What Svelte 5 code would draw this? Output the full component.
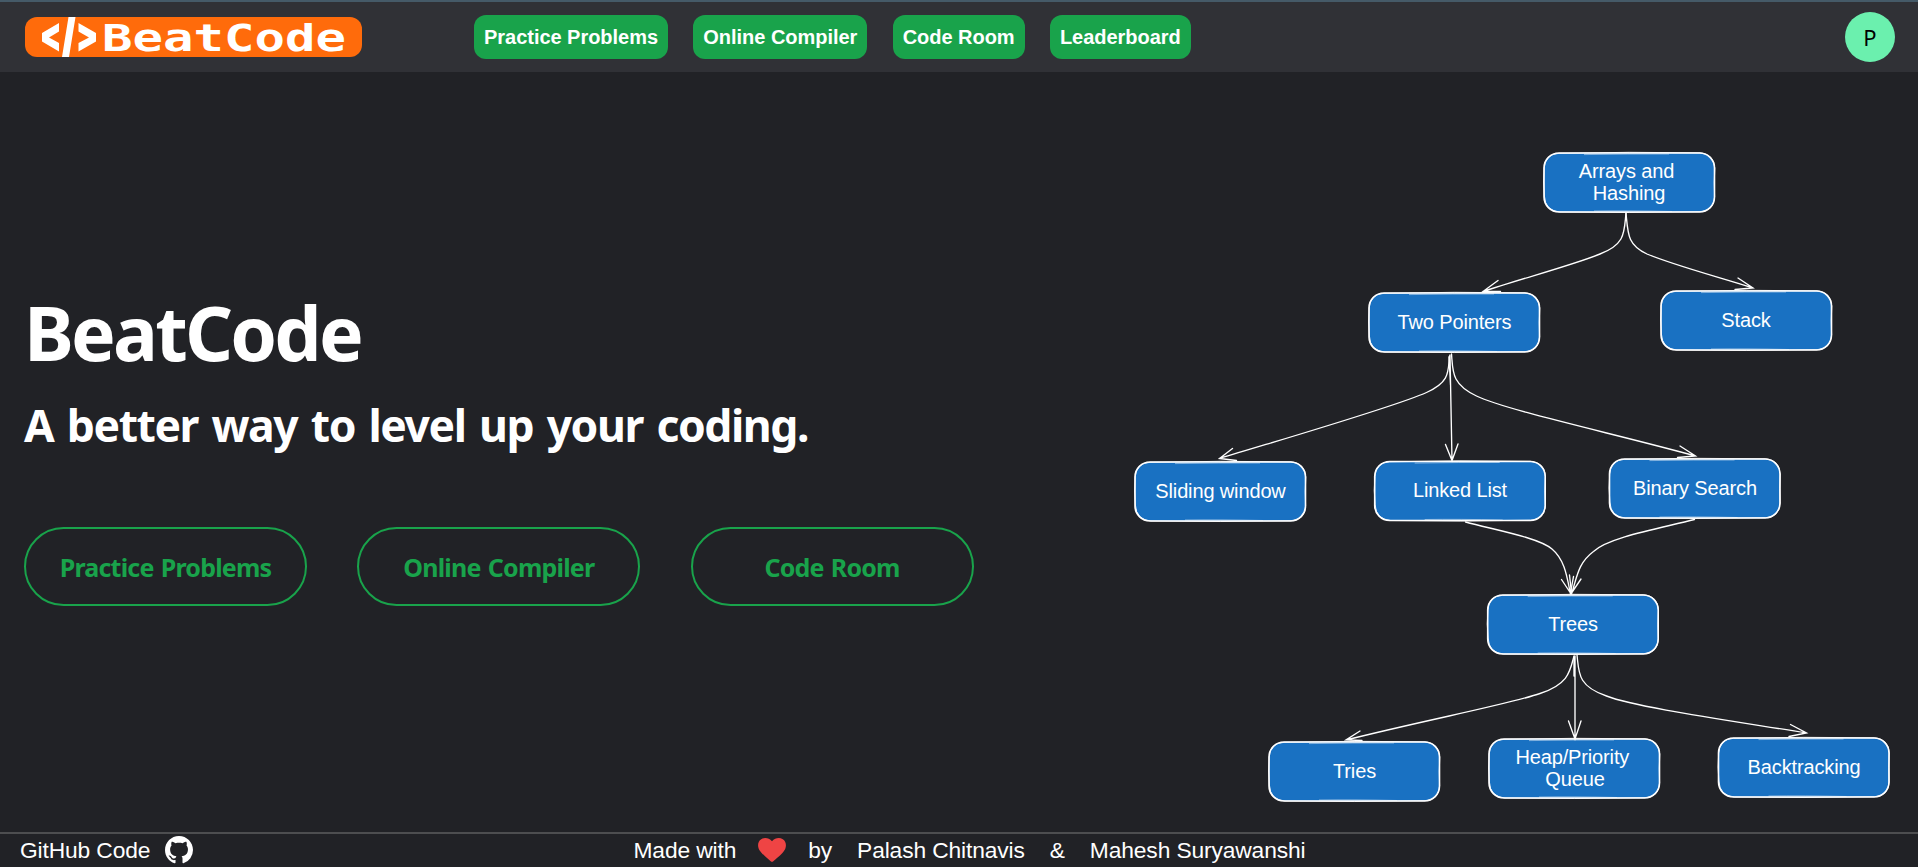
<script>
  const links = ['Practice Problems', 'Online Compiler', 'Code Room', 'Leaderboard'];
  const actions = ['Practice Problems', 'Online Compiler', 'Code Room'];

  // Each text line: [label, centre x, baseline y]
  const nodes = [
    { x: 1544, y: 153, lines: [['Arrays and', 1626.5, 178], ['Hashing', 1629, 200]] },
    { x: 1369, y: 293, lines: [['Two Pointers', 1454.5, 329]] },
    { x: 1661, y: 291, lines: [['Stack', 1746, 327]] },
    { x: 1135, y: 462, lines: [['Sliding window', 1220.5, 498]] },
    { x: 1374.7, y: 461.5, lines: [['Linked List', 1460, 497]] },
    { x: 1609.5, y: 459, lines: [['Binary Search', 1695, 495]] },
    { x: 1487.7, y: 595, lines: [['Trees', 1573, 631]] },
    { x: 1269, y: 742, lines: [['Tries', 1354.5, 778]] },
    { x: 1489, y: 739, lines: [['Heap/Priority', 1572.3, 764], ['Queue', 1575, 786]] },
    { x: 1718.5, y: 738, lines: [['Backtracking', 1804, 774]] }
  ];

  const edges = [
    'M1626 213C1624 232 1626 244 1600 254C1573 265 1520 279 1483 291.5M1498 280.5L1483 291.5L1500.5 291.5',
    'M1626 213C1628 233 1627 245 1647 254C1673 265 1715 276 1753 288M1738 278L1753 288L1735 289.5',
    'M1449.5 356C1448 372 1450 382 1426.5 392.5C1397 406 1290 437 1219.5 458.5M1232.5 448.5L1219.5 458.5L1236.5 460.5',
    'M1450 355L1452 460.5M1445.5 444.5L1452 460.5L1458 444M1449 357L1450.5 385',
    'M1451.5 354C1453 371 1451 384 1476.5 396C1505 410 1620 435 1695.5 456M1680 446L1695.5 456L1677.5 457.5',
    'M1465.5 522C1500 531 1539 538 1552 549C1565 560 1567 577 1570.5 594M1561.5 579.5L1570.5 593L1573.5 576.5',
    'M1694.5 519.5C1662 528 1609 537 1593.5 551.5C1578 563 1577 577 1571.5 594M1581 579L1571.5 593L1569.5 575',
    'M1574 656C1570 671 1569 684 1540 693.5C1510 704 1430 719 1346 740M1360 731L1346 740L1362 740.5',
    'M1575 656L1575 739M1568.5 721L1575 739L1581 721M1574 657L1574 676',
    'M1577 655C1579 672 1577 686 1606.5 696C1635 707 1720 719 1806.5 733M1790.5 724.5L1806.5 733L1789 736.5'
  ];
</script>

<div class="page">
  <header>
    <svg class="logo" width="337" height="40" viewBox="0 0 337 40" aria-label="BeatCode">
      <rect width="337" height="40" rx="12" fill="#ff6b0b" />
      <path fill="#fff" d="M34 6v8.500L24 20.500l10 5.500v8.500L17 24.500v-8.500zM43.500 0h7L44 40h-7zM53.500 6L71 16v8.500L53.500 34.500V26L64 20.500l-10.500-6z" />
      <text class="brand" x="77" y="33.500" textLength="244" lengthAdjust="spacingAndGlyphs">BeatCode</text>
    </svg>
    <nav>
      {#each links as link}<a href="#top">{link}</a>{/each}
    </nav>
    <div class="avatar">P</div>
  </header>

  <main>
    <section class="intro">
      <h1>BeatCode</h1>
      <h2>A better way to level up your coding.</h2>
      <div class="actions">
        {#each actions as action}<button>{action}</button>{/each}
      </div>
    </section>
    <svg class="roadmap" width="780" height="680" viewBox="1125 140 780 680">
      {#each nodes as n}
        <g transform="translate({n.x} {n.y})">
          <rect width="170.500" height="59" rx="15" fill="#1971c2" stroke="#fff" stroke-width="1.600" />
          <path class="sketch" d="M15 .3Q85-1.400 156-.2Q170 1 170.800 15Q169.800 29 170.600 44Q170 58 156 58.700Q85 60.200 16 59Q1 58 .4 43Q-1.200 29 .2 15Q1 1 15 .3Z" />
          <path class="sketch faint" d="M40 1.600Q85 .8 125 1M50 58Q85 57.500 128 58.500" />
        </g>
        {#each n.lines as line}
          <text class="label" x={line[1]} y={line[2]}>{line[0]}</text>
        {/each}
      {/each}
      {#each edges as d}<path class="edge" {d} />{/each}
    </svg>
  </main>

  <footer>
    <a class="repo" href="#top">
      GitHub Code
      <svg width="28" height="28" viewBox="0 0 16 16" fill="#fff"><path d="M8 0C3.580 0 0 3.580 0 8c0 3.540 2.290 6.530 5.470 7.590.4.070.55-.17.55-.38 0-.19-.01-.82-.01-1.490-2.010.37-2.530-.49-2.690-.94-.09-.23-.48-.94-.82-1.130-.28-.15-.68-.52-.01-.53.63-.01 1.080.58 1.230.82.72 1.210 1.870.87 2.330.66.07-.52.28-.87.51-1.070-1.780-.2-3.640-.89-3.640-3.950 0-.87.31-1.590.82-2.150-.08-.2-.36-1.020.08-2.120 0 0 .67-.21 2.200.82.64-.18 1.320-.27 2-.27s1.360.09 2 .27c1.530-1.040 2.200-.82 2.200-.82.44 1.100.16 1.920.08 2.120.51.56.82 1.270.82 2.150 0 3.070-1.870 3.750-3.650 3.950.29.25.54.73.54 1.480 0 1.070-.01 1.930-.01 2.200 0 .21.15.46.55.38A8.010 8.010 0 0 0 16 8c0-4.420-3.580-8-8-8z" /></svg>
    </a>
    <div class="credits">
      <span>Made with</span>
      <svg class="heart" width="28" height="24" viewBox="0 0 28 24"><path fill="#ef4444" d="M12.700 23.300C7 18.500 2.500 14.500.8 11C-.8 7 .3 3 3.200 1.200C6.500-.9 11-.2 14 3.300C17-.2 21.500-.9 24.800 1.200C27.700 3 28.800 7 27.200 11C25.500 14.500 21 18.500 15.300 23.300Q14 24.400 12.700 23.300Z" /></svg>
      <span>by</span>
      <span>Palash Chitnavis</span>
      <span>&amp;</span>
      <span>Mahesh Suryawanshi</span>
    </div>
  </footer>
</div>

<style>
  :global(body) { background: #212226; }
  * { box-sizing: border-box; }
  .page {
    display: flex; flex-direction: column; height: 867px; overflow: hidden;
    color: #fff; background: #212226;
    font-family: "Liberation Sans", Arial, sans-serif;
  }
  a { color: inherit; text-decoration: none; }
  header {
    display: flex; align-items: center; flex: none; height: 72px;
    padding: 0 23px 0 25px; background: #303136; border-top: 2px solid #455a68;
  }
  .logo { flex: none; display: block; overflow: visible; }
  .brand { font: bold 37.500px "DejaVu Sans Mono", monospace; fill: #fff; }
  nav { display: flex; gap: 25.300px; margin-left: 112px; }
  nav a {
    height: 44px; padding: 0 10px; border-radius: 12px; background: #19a34b;
    font-size: 20px; line-height: 44px; font-weight: 700; letter-spacing: -.03px; white-space: nowrap;
  }
  .avatar {
    width: 50px; height: 50px; margin-left: auto; border-radius: 50%;
    background: #6bf0ae; color: #000; text-align: center;
    font: 22px/50px "Noto Sans", sans-serif;
  }
  main { display: flex; flex: 1; justify-content: space-between; min-height: 0; padding: 0 13px 0 24px; }
  .intro { padding-top: 208px; font-family: "Noto Sans", sans-serif; white-space: nowrap; }
  h1 { margin: 0; font-size: 75px; line-height: 104px; font-weight: 700; letter-spacing: -2.800px; }
  h2 { margin: 10px 0 0; font-size: 44.500px; line-height: 62px; font-weight: 700; letter-spacing: -1.450px; word-spacing: 3.400px; }
  .actions { display: flex; gap: 50.300px; margin-top: 71px; }
  button {
    width: 283px; height: 79px; padding: 1px 0 0; border: 2px solid #19a34b; border-radius: 40px;
    background: none; color: #19a34b; font: 700 25px "Noto Sans", sans-serif;
    letter-spacing: -.8px; word-spacing: 1.500px;
  }
  .roadmap { flex: none; margin-top: 68px; }
  .sketch { fill: none; stroke: #fff; stroke-width: .9; }
  .faint { opacity: .5; }
  .edge { fill: none; stroke: #fff; stroke-width: 1.350; stroke-linecap: round; }
  .label { fill: #fff; font-size: 20px; letter-spacing: -.14px; text-anchor: middle; }
  footer {
    display: flex; align-items: center; flex: none; height: 35px; padding: 0 0 1px 20px;
    border-top: 2px solid #4d4e50; font-size: 22.800px; letter-spacing: -.13px; white-space: nowrap;
  }
  .repo { display: flex; align-items: center; gap: 15px; width: 613.500px; }
  .credits { display: flex; align-items: center; gap: 25px; }
  .heart { margin: 0 -3px; }
</style>
